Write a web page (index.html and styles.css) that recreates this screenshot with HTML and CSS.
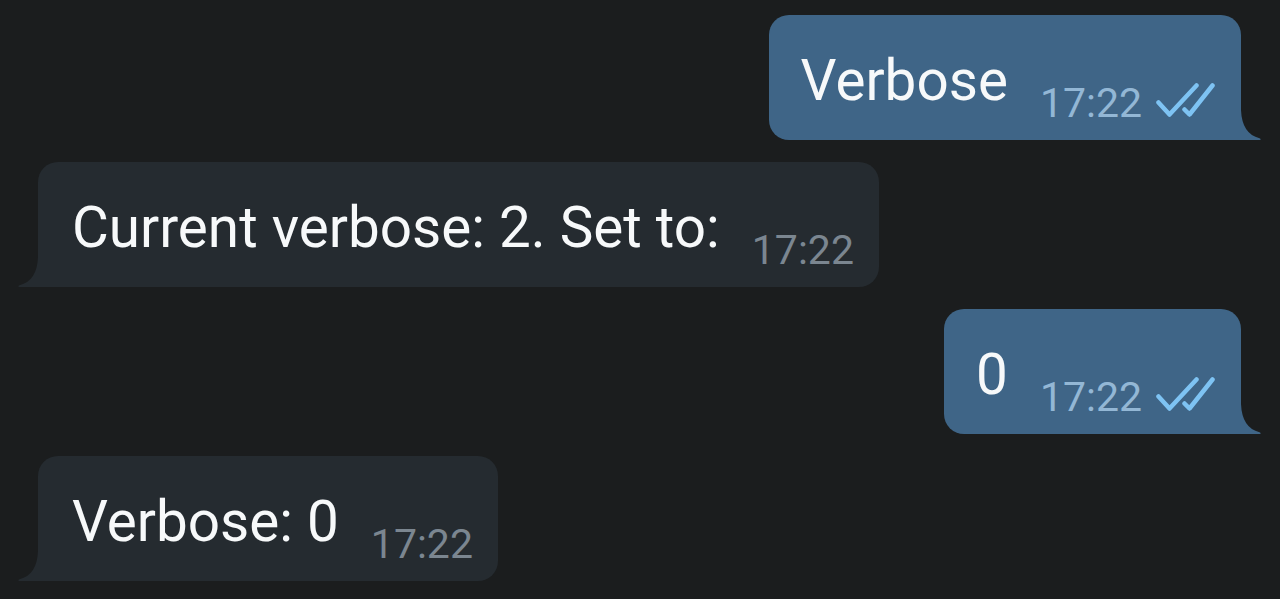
FILE: index.html
```html
<!DOCTYPE html>
<html lang="en">
<head>
<meta charset="utf-8">
<title>Chat</title>
<link rel="stylesheet" href="styles.css">
</head>
<body>
<main class="chat">
  <div class="bubble out">
    <span class="text">Verbose</span>
    <span class="time">17:22</span>
    <svg class="checks" viewBox="0 0 60 34" width="60" height="34" aria-hidden="true">
      <polyline points="3.5,19.5 14.5,31.5 41.5,2.5" />
      <polyline points="29.5,26.5 34.5,31.5 57.5,2.5" />
    </svg>
    <svg class="tail" viewBox="0 0 20 30" width="20" height="30" aria-hidden="true">
      <path d="M0 0 Q1 24 18.5 28.2 Q20.5 29 19 30 L0 30 Z" />
    </svg>
  </div>
  <div class="bubble in">
    <svg class="tail" viewBox="0 0 20 30" width="20" height="30" aria-hidden="true">
      <path d="M20 0 Q19 24 1.5 28.2 Q-0.5 29 1 30 L20 30 Z" />
    </svg>
    <span class="text">Current verbose: 2. Set to:</span>
    <span class="time">17:22</span>
  </div>
  <div class="bubble out">
    <span class="text">0</span>
    <span class="time">17:22</span>
    <svg class="checks" viewBox="0 0 60 34" width="60" height="34" aria-hidden="true">
      <polyline points="3.5,19.5 14.5,31.5 41.5,2.5" />
      <polyline points="29.5,26.5 34.5,31.5 57.5,2.5" />
    </svg>
    <svg class="tail" viewBox="0 0 20 30" width="20" height="30" aria-hidden="true">
      <path d="M0 0 Q1 24 18.5 28.2 Q20.5 29 19 30 L0 30 Z" />
    </svg>
  </div>
  <div class="bubble in">
    <svg class="tail" viewBox="0 0 20 30" width="20" height="30" aria-hidden="true">
      <path d="M20 0 Q19 24 1.5 28.2 Q-0.5 29 1 30 L20 30 Z" />
    </svg>
    <span class="text">Verbose: 0</span>
    <span class="time">17:22</span>
  </div>
</main>
</body>
</html>
```
FILE: styles.css
```css
html, body {
  margin: 0;
  padding: 0;
  background: #1b1d1e;
  height: 100%;
  overflow: hidden;
}

body {
  font-family: Roboto, "Noto Sans", "Liberation Sans", sans-serif;
}

.chat {
  display: flex;
  flex-direction: column;
  gap: 22px;
  padding: 15px 39px 0 38px;
}

.bubble {
  position: relative;
  box-sizing: border-box;
  height: 125px;
  display: flex;
  align-items: flex-start;
  padding-top: 33px;
}

.bubble.out {
  align-self: flex-end;
  background: #3f6587;
  border-radius: 20px 20px 0 20px;
  padding-left: 32px;
  padding-right: 26px;
}

.bubble.in {
  align-self: flex-start;
  background: #252b30;
  border-radius: 20px 20px 20px 0;
  padding-left: 34px;
  padding-right: 25px;
}

.text {
  font-size: 56.6px;
  line-height: 66px;
  color: #f7f9fa;
  white-space: nowrap;
}

.time {
  font-size: 41px;
  line-height: 48px;
  margin-top: 31px;
  margin-left: 32px;
  white-space: nowrap;
}

.out .time {
  color: #93b7d5;
}

.in .time {
  color: #7b8690;
}

.checks {
  display: block;
  margin-left: 13px;
  margin-top: 35px;
  flex: none;
}

.checks polyline {
  fill: none;
  stroke: #7ec3f3;
  stroke-width: 4.5;
  stroke-linecap: round;
  stroke-linejoin: round;
}

.tail {
  position: absolute;
  bottom: 0;
  display: block;
}

.out .tail {
  left: 100%;
}

.out .tail path {
  fill: #3f6587;
}

.in .tail {
  right: 100%;
}

.in .tail path {
  fill: #252b30;
}
```
